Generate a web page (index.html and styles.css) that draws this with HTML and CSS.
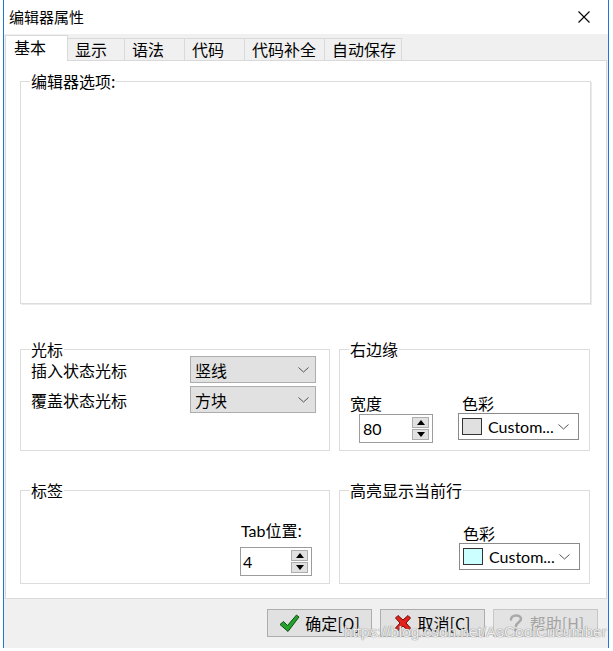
FILE: index.html
```html
<!DOCTYPE html>
<html lang="zh-CN">
<head>
<meta charset="utf-8">
<title>编辑器属性</title>
<link rel="stylesheet" href="styles.css">
</head>
<body>
<div class="window">
  <div class="titlebar">
    <span class="title">编辑器属性</span>
    <svg class="close" width="12" height="12" viewBox="0 0 12 12"><path d="M0.5 0.5 L11.5 11.5 M11.5 0.5 L0.5 11.5" stroke="#000" stroke-width="1.1" fill="none"/></svg>
  </div>
  <div class="client">
    <div class="tabs">
      <div class="tab active t1">基本</div>
      <div class="tab t2">显示</div>
      <div class="tab t3">语法</div>
      <div class="tab t4">代码</div>
      <div class="tab t5">代码补全</div>
      <div class="tab t6">自动保存</div>
    </div>
    <div class="page">
      <div class="group editor">
        <div class="gtitle">编辑器选项:</div>
      </div>
      <div class="groups">
        <div class="group cursor">
          <div class="gtitle">光标</div>
          <div class="cursor-grid">
            <span class="lbl">插入状态光标</span>
            <div class="combo"><span>竖线</span><svg class="chev" width="11" height="6" viewBox="0 0 11 6"><path d="M0.5 0.5 L5.5 5 L10.5 0.5" stroke="#555" fill="none"/></svg></div>
            <span class="lbl">覆盖状态光标</span>
            <div class="combo"><span>方块</span><svg class="chev" width="11" height="6" viewBox="0 0 11 6"><path d="M0.5 0.5 L5.5 5 L10.5 0.5" stroke="#555" fill="none"/></svg></div>
          </div>
        </div>
        <div class="group margin">
          <div class="gtitle">右边缘</div>
          <div class="margin-body">
            <div class="col1">
              <div class="lbl">宽度</div>
              <div class="spin w80">
                <span class="num">80</span>
                <div class="spin-btns">
                  <div class="sbtn"><svg width="8" height="5" viewBox="0 0 8 5"><path d="M0 5 L4 0 L8 5 Z" fill="#000"/></svg></div>
                  <div class="sbtn"><svg width="8" height="5" viewBox="0 0 8 5"><path d="M0 0 L4 5 L8 0 Z" fill="#000"/></svg></div>
                </div>
              </div>
            </div>
            <div class="col2">
              <div class="lbl pad4">色彩</div>
              <div class="ccombo"><span class="swatch gray"></span><span class="ctext">Custom...</span><svg class="chev" width="11" height="6" viewBox="0 0 11 6"><path d="M0.5 0.5 L5.5 5 L10.5 0.5" stroke="#555" fill="none"/></svg></div>
            </div>
          </div>
        </div>
        <div class="group tabgrp">
          <div class="gtitle">标签</div>
          <div class="tab-body">
            <div class="lbl pad1"><span class="latin">Tab</span>位置:</div>
            <div class="spin w4">
              <span class="num">4</span>
              <div class="spin-btns">
                <div class="sbtn"><svg width="8" height="5" viewBox="0 0 8 5"><path d="M0 5 L4 0 L8 5 Z" fill="#000"/></svg></div>
                <div class="sbtn"><svg width="8" height="5" viewBox="0 0 8 5"><path d="M0 0 L4 5 L8 0 Z" fill="#000"/></svg></div>
              </div>
            </div>
          </div>
        </div>
        <div class="group hl">
          <div class="gtitle">高亮显示当前行</div>
          <div class="hl-body">
            <div class="lbl pad4">色彩</div>
            <div class="ccombo"><span class="swatch cyan"></span><span class="ctext">Custom...</span><svg class="chev" width="11" height="6" viewBox="0 0 11 6"><path d="M0.5 0.5 L5.5 5 L10.5 0.5" stroke="#555" fill="none"/></svg></div>
          </div>
        </div>
      </div>
    </div>
    <div class="buttons">
      <div class="btn">
        <svg width="21" height="19" viewBox="0 0 21 19"><path d="M1 10.5 L4.5 7.5 L8.5 11.5 L17.5 1 L20 3 L9 17.5 Z" fill="#23a32b" stroke="#0f4f14" stroke-width="1" stroke-linejoin="round"/></svg>
        <span>确定[O]</span>
      </div>
      <div class="btn">
        <svg width="18" height="18" viewBox="0 0 18 18"><path d="M1.5 4 L4 1.5 L9 6 L14 1.5 L16.5 4 L12 9 L16.5 14 L14 16.5 L9 12 L4 16.5 L1.5 14 L6 9 Z" fill="#e3221c" stroke="#6e0d09" stroke-width="1" stroke-linejoin="round"/></svg>
        <span>取消[C]</span>
      </div>
      <div class="btn disabled">
        <svg width="18" height="20" viewBox="0 0 18 20"><path d="M4 6.5 C4 1.5 14 1 14 6 C14 9 9.5 9.5 9 13" stroke="#a9a9a9" stroke-width="2.6" fill="none" stroke-linecap="round"/><circle cx="8.6" cy="17" r="1.7" fill="#a9a9a9"/></svg>
        <span>帮助[H]</span>
      </div>
    </div>
    <div class="watermark">https://blog.csdn.net/AsCoolCucumber</div>
  </div>
</div>
</body>
</html>
```
FILE: styles.css
```css
html, body {
  margin: 0;
  padding: 0;
}
body {
  background: #fff;
  font-family: "Noto Sans CJK SC", "Noto Sans", sans-serif;
  font-size: 16px;
  color: #000;
}
.window {
  margin-left: 3px;
  width: 606px;
  height: 648px;
  box-sizing: border-box;
  border-left: 1px solid #1c78d4;
  border-right: 1px solid #1c78d4;
  display: flex;
  flex-direction: column;
}
.titlebar {
  height: 34px;
  flex: none;
  background: #fff;
  display: flex;
  align-items: center;
  justify-content: space-between;
  padding: 0 18px 0 5px;
}
.title {
  font-size: 15px;
  line-height: 20px;
}
.close {
  display: block;
}
.client {
  flex: 1;
  background: #f0f0f0;
  display: flex;
  flex-direction: column;
  position: relative;
}
.tabs {
  height: 26px;
  flex: none;
  display: flex;
  align-items: flex-end;
  padding-left: 1px;
  position: relative;
  z-index: 1;
}
.tab {
  height: 22px;
  box-sizing: border-box;
  border: 1px solid #d9d9d9;
  border-bottom: none;
  border-left: none;
  background: #f0f0f0;
  line-height: 21px;
  padding-left: 7px;
  white-space: nowrap;
}
.tab.active {
  height: 26px;
  margin-bottom: -1px;
  background: #fff;
  border-left: 1px solid #d9d9d9;
  line-height: 23px;
  padding-left: 8px;
}
.t1 { width: 63px; }
.t2 { width: 57px; }
.t3 { width: 60px; }
.t4 { width: 60px; }
.t5 { width: 80px; }
.t6 { width: 77px; }
.page {
  flex: none;
  height: 539px;
  margin: 0 1px;
  box-sizing: border-box;
  background: #fff;
  border: 1px solid #d9d9d9;
  padding: 0 0 0 14px;
}
.group {
  border: 1px solid #dcdcdc;
  box-sizing: border-box;
  padding: 0 10px;
}
.gtitle {
  margin: -10px 0 0 -1px;
  padding: 0 1px;
  width: fit-content;
  height: 18px;
  line-height: 18px;
  background: #fff;
  white-space: nowrap;
}
.editor {
  width: 571px;
  height: 223px;
  margin-top: 20px;
  box-shadow: 1px 1px 0 #ececec;
}
.groups {
  margin-top: 45px;
  display: grid;
  grid-template-columns: 310px 251px;
  column-gap: 9px;
  row-gap: 39px;
}
.cursor, .margin { height: 102px; }
.tabgrp, .hl { height: 94px; }
.lbl {
  line-height: 18px;
  white-space: nowrap;
}
.latin, .num, .ctext {
  font-family: "Lato", "Noto Sans", sans-serif;
}
.pad4 { padding-left: 4px; }
.pad1 { padding-left: 1px; }
.cursor-grid {
  margin-top: -2px;
  display: grid;
  grid-template-columns: 159px 126px;
  row-gap: 3px;
  align-items: center;
}
.combo {
  height: 27px;
  box-sizing: border-box;
  border: 1px solid #adadad;
  background: #e1e1e1;
  display: flex;
  align-items: center;
  justify-content: space-between;
  padding: 0 6px 0 4px;
  line-height: 18px;
}
.chev { display: block; flex: none; }
.margin-body {
  display: flex;
  margin-top: 36px;
}
.col1 { width: 109px; }
.col2 { width: 121px; }
.spin {
  height: 29px;
  box-sizing: border-box;
  border: 1px solid #9c9c9c;
  background: #fff;
  display: flex;
  align-items: center;
  justify-content: space-between;
  padding: 0 3px;
  line-height: 18px;
}
.w80 {
  width: 74px;
  margin: 2px 0 0 9px;
}
.w4 {
  width: 72px;
  margin-top: 7px;
  padding-left: 2px;
}
.spin-btns {
  display: flex;
  flex-direction: column;
  gap: 1px;
}
.sbtn {
  width: 17px;
  height: 11px;
  box-sizing: border-box;
  border: 1px solid #adadad;
  background: #e1e1e1;
  display: flex;
  align-items: center;
  justify-content: center;
}
.sbtn svg { display: block; }
.ccombo {
  width: 121px;
  height: 27px;
  margin-top: 1px;
  box-sizing: border-box;
  border: 1px solid #8a8a8a;
  background: #fff;
  display: flex;
  align-items: center;
  padding: 0 9px 0 3px;
  line-height: 18px;
}
.swatch {
  width: 20px;
  height: 17px;
  box-sizing: border-box;
  border: 1px solid #333;
  flex: none;
}
.swatch.gray { background: #e0e0e0; }
.swatch.cyan { background: #ccffff; }
.ctext {
  margin-left: 6px;
  flex: 1;
  white-space: nowrap;
}
.tab-body {
  margin: 22px 0 0 209px;
}
.hl-body {
  margin: 25px 0 0 109px;
}
.buttons {
  flex: 1;
  display: flex;
  justify-content: flex-end;
  align-items: flex-start;
  gap: 8px;
  padding: 10px 10px 0 0;
}
.btn {
  width: 105px;
  height: 28px;
  box-sizing: border-box;
  border: 1px solid #adadad;
  background: #e1e1e1;
  display: flex;
  align-items: center;
  justify-content: center;
  gap: 5px;
  line-height: 18px;
}
.btn svg { display: block; }
.btn.disabled {
  background: #e3e3e3;
  border-color: #c6c6c6;
  color: #a3a3a3;
}
.watermark {
  position: absolute;
  left: 340px;
  bottom: 6px;
  font-family: "Liberation Sans", Arial, sans-serif;
  font-size: 15.4px;
  line-height: 20px;
  color: rgba(255, 255, 255, 0.85);
  text-shadow: 0 0 1px #8a8a8a, 0 0 1px #8a8a8a;
  white-space: nowrap;
  pointer-events: none;
}
```
